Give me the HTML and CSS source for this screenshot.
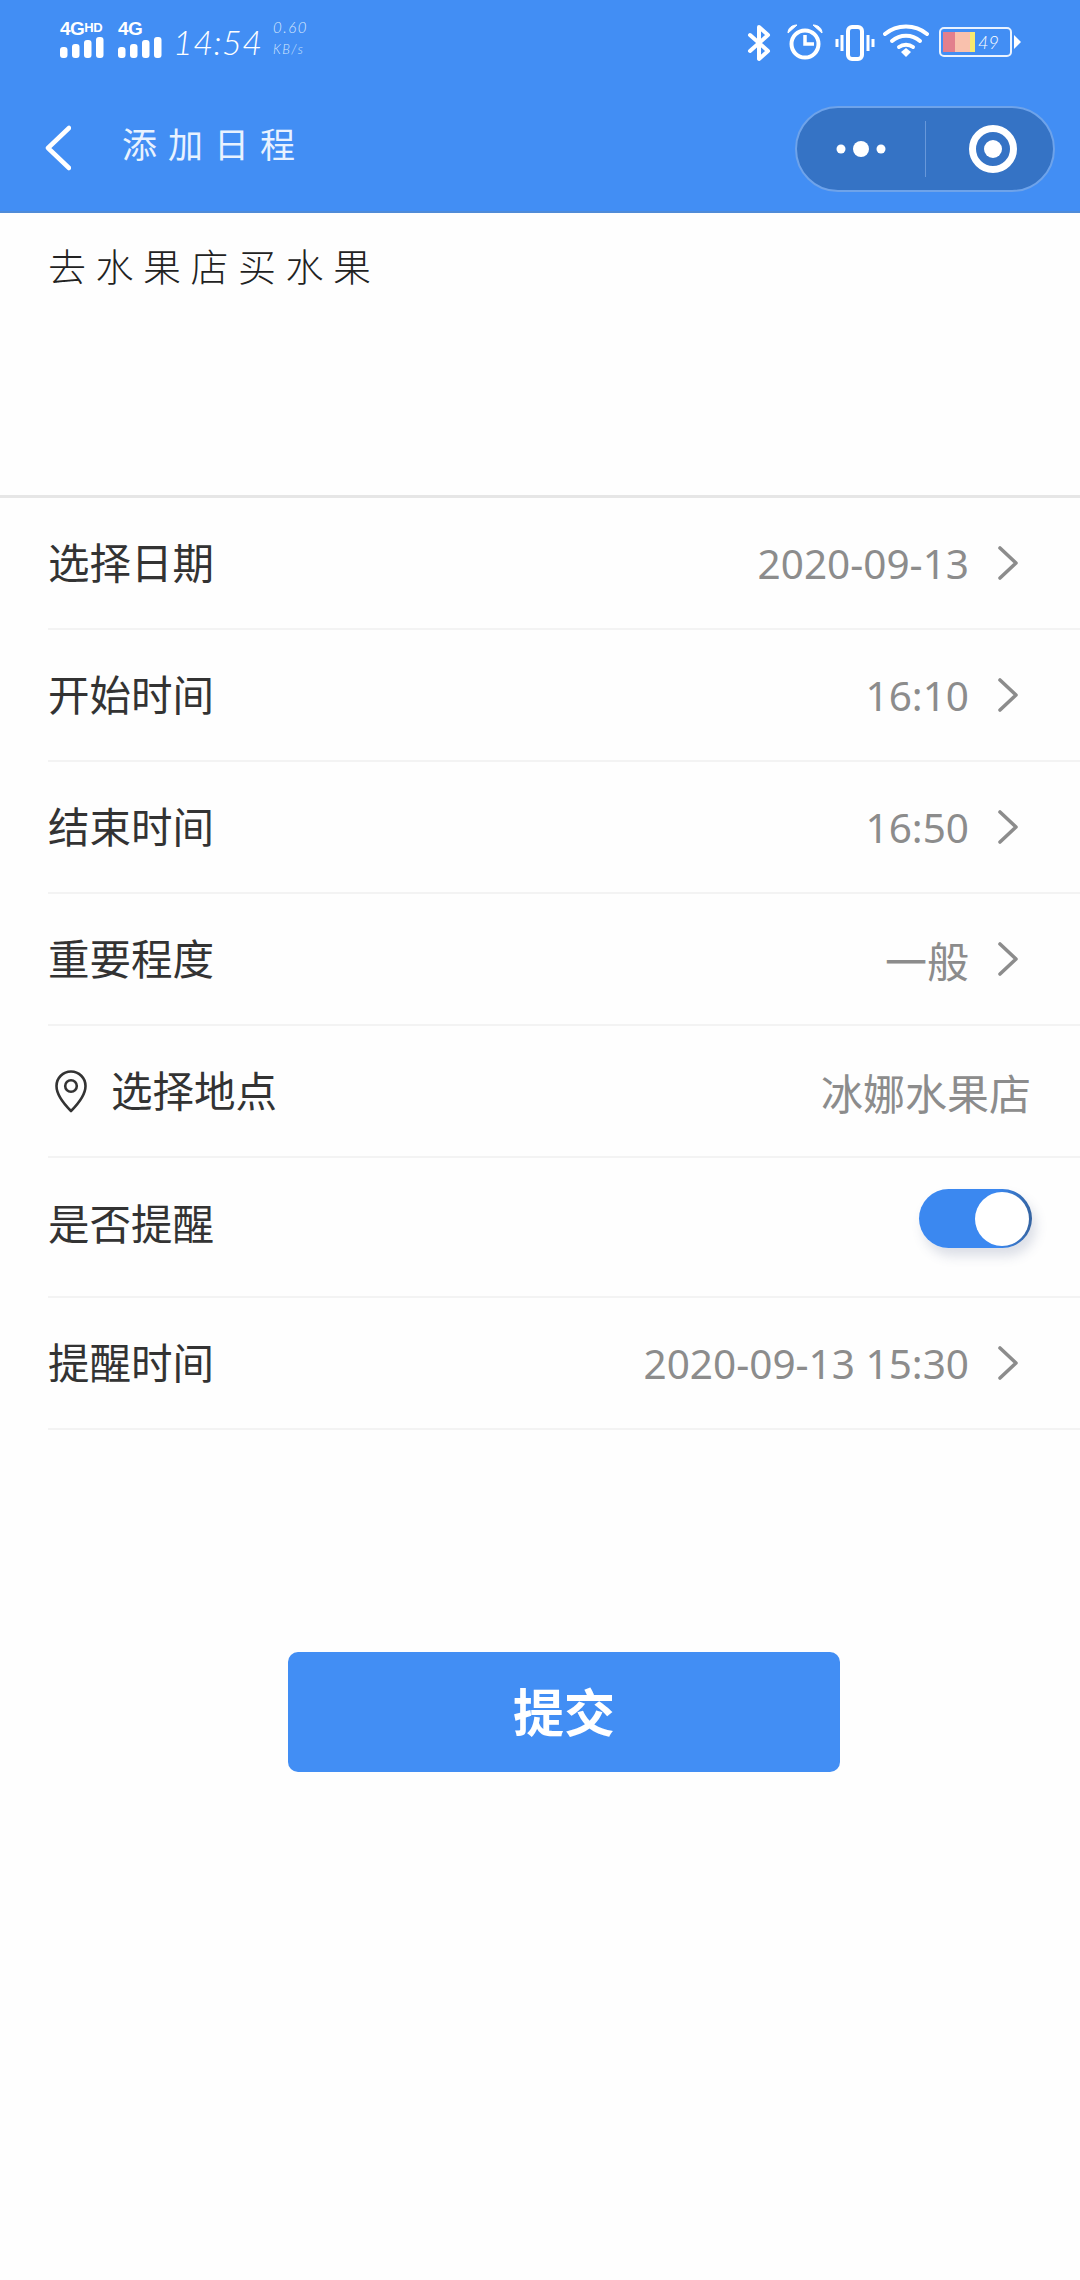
FILE: index.html
```html
<!DOCTYPE html>
<html lang="zh-CN">
<head>
<meta charset="utf-8">
<title>添加日程</title>
<link rel="stylesheet" href="styles.css">
</head>
<body>
<div class="page">
  <header class="header">
    <div class="statusbar">
      <div class="status-left">
        <div class="signal">
          <div class="net">4G<sup class="hd">HD</sup></div>
          <svg class="bars" width="45" height="21" viewBox="0 0 45 21"><rect x="0" y="10" width="7.500" height="11" rx="3"/><rect x="12" y="7" width="7.500" height="14" rx="3"/><rect x="24" y="3" width="7.500" height="18" rx="3"/><rect x="36" y="0" width="7.500" height="21" rx="3"/></svg>
        </div>
        <div class="signal signal-two">
          <div class="net">4G</div>
          <svg class="bars" width="45" height="21" viewBox="0 0 45 21"><rect x="0" y="10" width="7.500" height="11" rx="3"/><rect x="12" y="7" width="7.500" height="14" rx="3"/><rect x="24" y="3" width="7.500" height="18" rx="3"/><rect x="36" y="0" width="7.500" height="21" rx="3"/></svg>
        </div>
        <div class="clock">14:54</div>
        <div class="speed"><span>0.60</span><span class="unit">KB/s</span></div>
      </div>
      <div class="status-right">
        <svg class="ico" width="24" height="38" viewBox="0 0 24 38" fill="none" stroke="#fff" stroke-width="4" stroke-linecap="round" stroke-linejoin="round"><path d="M3 11l18 16-9 8V3l9 8L3 27"/></svg>
        <svg class="ico ico-alarm" width="38" height="38" viewBox="0 0 38 38" fill="none" stroke="#fff"><circle cx="19" cy="21" r="13.500" stroke-width="4"/><path d="M19 12v9h9" stroke-width="3.500"/><path d="M2 10c0-5 4-8 9-8zM36 10c0-5-4-8-9-8z" fill="#fff" stroke-width="1"/></svg>
        <svg class="ico ico-vib" width="40" height="36" viewBox="0 0 40 36" fill="none" stroke="#fff"><rect x="13" y="2" width="14" height="32" rx="4" stroke-width="4"/><path d="M7 10v16M33 10v16" stroke-width="3"/><path d="M2 14v8M38 14v8" stroke-width="3"/></svg>
        <svg class="ico ico-wifi" width="46" height="34" viewBox="0 0 46 34" fill="none" stroke="#fff" stroke-width="4" stroke-linecap="round"><path d="M2 10c12-10 30-10 42 0"/><path d="M9 17c8-7 20-7 28 0"/><path d="M16 23c4-3 10-3 14 0"/><path d="M18 28l5-4 5 4-5 5z" fill="#fff" stroke="none"/></svg>
        <div class="battery">
          <div class="cell">
            <i class="seg seg-a"></i><i class="seg seg-b"></i><i class="seg seg-c"></i>
            <span class="pct">49</span>
          </div>
          <i class="tip"></i>
        </div>
      </div>
    </div>
    <nav class="navbar">
      <svg class="back" width="26" height="46" viewBox="0 0 26 46" fill="none" stroke="#fff" stroke-width="4.500" stroke-linecap="round" stroke-linejoin="round"><path d="M24 3L3 23l21 20"/></svg>
      <div class="title">添加日程</div>
      <div class="capsule">
        <div class="cap-part cap-menu">
          <svg width="50" height="18" viewBox="0 0 50 18" fill="#fff"><circle cx="5" cy="9" r="4.500"/><circle cx="25" cy="9" r="8"/><circle cx="45" cy="9" r="4.500"/></svg>
        </div>
        <i class="cap-divider"></i>
        <div class="cap-part cap-target">
          <svg width="50" height="50" viewBox="0 0 50 50"><circle cx="25" cy="25" r="20.500" fill="none" stroke="#fff" stroke-width="7"/><circle cx="25" cy="25" r="9" fill="#fff"/></svg>
        </div>
      </div>
    </nav>
  </header>

  <section class="memo">
    <p class="memo-text">去水果店买水果</p>
  </section>

  <div class="content">
    <ul class="list">
      <li class="row">
        <span class="label">选择日期</span>
        <span class="value">2020-09-13</span>
        <svg class="chev" width="20" height="34" viewBox="0 0 20 34" fill="none" stroke="#8c8c8c" stroke-width="3.600" stroke-linecap="round" stroke-linejoin="round"><path d="M2 2l16 15L2 32"/></svg>
      </li>
      <li class="row">
        <span class="label">开始时间</span>
        <span class="value">16:10</span>
        <svg class="chev" width="20" height="34" viewBox="0 0 20 34" fill="none" stroke="#8c8c8c" stroke-width="3.600" stroke-linecap="round" stroke-linejoin="round"><path d="M2 2l16 15L2 32"/></svg>
      </li>
      <li class="row">
        <span class="label">结束时间</span>
        <span class="value">16:50</span>
        <svg class="chev" width="20" height="34" viewBox="0 0 20 34" fill="none" stroke="#8c8c8c" stroke-width="3.600" stroke-linecap="round" stroke-linejoin="round"><path d="M2 2l16 15L2 32"/></svg>
      </li>
      <li class="row">
        <span class="label">重要程度</span>
        <span class="value value-cjk">一般</span>
        <svg class="chev" width="20" height="34" viewBox="0 0 20 34" fill="none" stroke="#8c8c8c" stroke-width="3.600" stroke-linecap="round" stroke-linejoin="round"><path d="M2 2l16 15L2 32"/></svg>
      </li>
      <li class="row">
        <svg class="pin" width="34" height="44" viewBox="0 0 34 44" fill="none" stroke="#333" stroke-width="2.600"><path d="M17 42C9 34 2.500 26 2.500 17a14.500 14.500 0 0 1 29 0C31.500 26 25 34 17 42z" stroke-linejoin="round"/><circle cx="17" cy="17" r="5.800"/></svg>
        <span class="label">选择地点</span>
        <span class="value value-cjk">冰娜水果店</span>
      </li>
      <li class="row row-tall">
        <span class="label label-raised">是否提醒</span>
        <div class="switch"><i class="knob"></i></div>
      </li>
      <li class="row">
        <span class="label">提醒时间</span>
        <span class="value">2020-09-13 15:30</span>
        <svg class="chev" width="20" height="34" viewBox="0 0 20 34" fill="none" stroke="#8c8c8c" stroke-width="3.600" stroke-linecap="round" stroke-linejoin="round"><path d="M2 2l16 15L2 32"/></svg>
      </li>
    </ul>

    <div class="actions">
      <button class="submit" type="button">提交</button>
    </div>
  </div>
</div>
</body>
</html>
```

FILE: styles.css
```css
* { box-sizing: border-box; }
html, body { margin: 0; padding: 0; background: #fff; }
body { font-family: "Noto Sans", "Noto Sans CJK SC", sans-serif; color: #333; }
.page { width: 1080px; height: 2280px; overflow: hidden; background: #fefefe; }

.header { height: 213px; background: #428ef4; border-bottom: 2px solid #4f8bd8; color: #fff; }

.statusbar { height: 84px; padding: 20px 59px 0 60px; display: flex; justify-content: space-between; align-items: flex-start; }
.status-left { display: flex; align-items: flex-start; }
.status-right { display: flex; align-items: flex-start; padding-top: 4px; }

.signal { width: 58px; }
.signal-two { width: 55px; }
.net { height: 17px; font: 700 19px/17px "Liberation Sans", sans-serif; letter-spacing: -0.5px; white-space: nowrap; }
.hd { font-size: 13px; line-height: 12px; vertical-align: 3px; }
.bars { display: block; fill: #fff; }

.clock { margin-top: 5px; font: italic 300 34px/34px "Lato", sans-serif; letter-spacing: 0.5px; width: 100px; }
.speed { display: flex; flex-direction: column; font: italic 300 15px/15px "Lato", sans-serif; letter-spacing: 1.5px; gap: 7px; color: #d8e8fd; }
.unit { font-size: 13px; }

.ico { display: block; flex: none; }
.ico-alarm { margin-left: 15px; margin-top: -1px; }
.ico-vib { margin-left: 11px; margin-top: 1px; }
.ico-wifi { margin-left: 8px; }
.battery { margin-left: 10px; display: flex; align-items: center; margin-top: 3px; }
.cell { position: relative; width: 73px; height: 30px; border: 2px solid #eaf3ff; border-radius: 5px; padding: 3px 2px; display: flex; }
.seg { display: block; height: 100%; }
.seg-a { width: 12px; background: #e27f8d; }
.seg-b { width: 15px; background: #f9c1ad; }
.seg-c { width: 5px; background: #f7ea6f; }
.pct { margin-left: 3px; font: italic 300 18px/20px "Lato", sans-serif; color: #fff; }
.tip { display: block; width: 0; height: 0; margin-left: 2px; border-left: 7px solid #fff; border-top: 7px solid transparent; border-bottom: 7px solid transparent; }

.navbar { height: 127px; padding: 0 25px 0 45px; display: flex; align-items: center; }
.back { flex: none; }
.title { margin: 0 0 5px 51px; font-size: 35px; font-weight: 400; letter-spacing: 11px; color: #e8f2ff; flex: 1; line-height: 40px; }
.capsule { width: 260px; height: 86px; border: 2px solid #6ea3ea; border-radius: 43px; background: #3573c5; display: flex; align-items: center; margin-top: 2px; }
.cap-part { display: flex; align-items: center; justify-content: center; }
.cap-menu { flex: none; width: 128px; }
.cap-target { flex: 1; padding-left: 6px; }
.cap-part svg { display: block; }
.cap-divider { display: block; width: 1px; height: 56px; background: #6898da; }

.memo { height: 285px; padding: 30px 48px 0; border-bottom: 3px solid #e6e6e6; }
.memo-text { margin: 0; font-size: 38px; font-weight: 300; letter-spacing: 9.500px; line-height: 46px; color: #222; }

.content { padding-left: 48px; }
.list { margin: 0; padding: 0; list-style: none; }
.row { height: 132px; padding-right: 49px; border-bottom: 2px solid #f3f3f3; display: flex; align-items: center; }
.row-tall { height: 140px; }
.label { font-size: 41.500px; color: #333; flex: 1; white-space: nowrap; margin-bottom: 4px; }
.label-raised { margin-bottom: 10px; }
.value { font-size: 40.500px; color: #8c8c8c; white-space: nowrap; }
.value-cjk { font-size: 42px; }
.chev { flex: none; margin: 0 13px 0 29px; display: block; }
.pin { flex: none; margin-left: 6px; margin-right: 23px; display: block; }

.switch { position: relative; width: 113px; height: 59px; margin: 0 -1px 18px 0; border-radius: 30px; background: linear-gradient(90deg, #3b88f0 70%, #35639f 100%); box-shadow: 4px 8px 12px rgba(60, 80, 120, 0.18); }
.knob { position: absolute; top: 3px; right: 3px; width: 54px; height: 54px; border-radius: 50%; background: #fff; }

.actions { padding-top: 222px; display: flex; justify-content: center; }
.submit { width: 552px; height: 120px; border: 0; border-radius: 10px; background: #428ef4; color: #fff; font-family: "Noto Sans CJK SC", sans-serif; font-size: 51px; font-weight: 700; padding: 0 0 4px; }
```
